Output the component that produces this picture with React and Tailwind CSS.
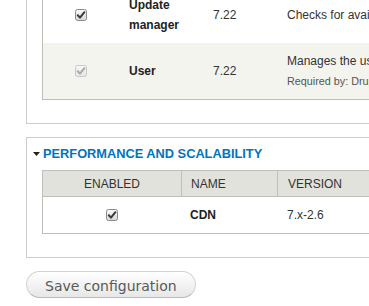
import React from "react";

function Check({ disabled = false, id }) {
  const stroke = disabled ? "#c8c8c8" : "#8a8a8a";
  const mark = disabled ? "#a9a9a9" : "#3a3a3a";
  return (
    <svg width="12" height="12" viewBox="0 0 12 12" className="block">
      <defs>
        <linearGradient id={id} x1="0" y1="0" x2="0" y2="1">
          <stop offset="0" stopColor={disabled ? "#f8f8f8" : "#fbfbfb"} />
          <stop offset="1" stopColor={disabled ? "#e6e6e6" : "#d6d6d6"} />
        </linearGradient>
      </defs>
      <rect x="0.5" y="0.5" width="11" height="11" rx="2" fill={`url(#${id})`} stroke={stroke} />
      <path d="M2.8 6.2 L5 8.6 L9.4 3.2" fill="none" stroke={mark} strokeWidth="2" strokeLinecap="round" strokeLinejoin="round" />
    </svg>
  );
}

export default function App() {
  return (
    <div className="w-[369px] h-[306px] overflow-hidden bg-white font-['Liberation_Sans',Arial,sans-serif] text-[12px] leading-[20px] text-[#333]">
      <div className="w-[700px] pl-[26px] -mt-[13px]">
        {/* fieldset 1 (top cut off) */}
        <div className="border-x border-b border-[#cccccc] pl-[15px] pb-[23px]">
          <div className="border-x border-b border-[#bebfb9]">
            <div className="flex h-[56px] items-center bg-white">
              <div className="w-[76px] shrink-0 flex justify-center">
                <Check id="c1" />
              </div>
              <div className="w-[84px] shrink-0 px-[10px] font-bold text-[#222]">Update manager</div>
              <div className="w-[74px] shrink-0 px-[10px]">7.22</div>
              <div className="flex-1 min-w-0 px-[10px] whitespace-nowrap">
                Checks for available updates, and can securely install or update modules and themes via a web interface.
              </div>
            </div>
            <div className="flex h-[56px] items-center bg-[#f3f4ee]">
              <div className="w-[76px] shrink-0 flex justify-center">
                <Check id="c2" disabled />
              </div>
              <div className="w-[84px] shrink-0 px-[10px] font-bold text-[#222]">User</div>
              <div className="w-[74px] shrink-0 px-[10px]">7.22</div>
              <div className="flex-1 min-w-0 px-[10px] whitespace-nowrap">
                <div>Manages the user registration and login system.</div>
                <div className="text-[10.8px] text-[#555]">Required by: Drupal (Field type(s) in use - see Field list)</div>
              </div>
            </div>
          </div>
        </div>

        {/* fieldset 2 */}
        <div className="mt-[13px] border border-[#cccccc] pb-[23px]">
          <div className="mt-[6px] h-[20px] pl-[6px] flex items-center gap-[3px]">
            <svg width="7" height="4" viewBox="0 0 7 4" className="block">
              <path d="M0 0 H7 L3.5 4 Z" fill="#222" />
            </svg>
            <span className="text-[12.8px] font-bold uppercase text-[#0074bd]">Performance and scalability</span>
          </div>
          <div className="mt-[6px] ml-[15px] border border-[#bebfb9]">
            <div className="flex h-[26px] items-center bg-[#e1e2dc] border-b border-[#bebfb9] uppercase">
              <div className="w-[138px] shrink-0 h-full flex items-center justify-center">Enabled</div>
              <div className="w-[96px] shrink-0 h-full flex items-center border-l border-[#bebfb9] pl-[9px]">Name</div>
              <div className="flex-1 h-full flex items-center border-l border-[#bebfb9] pl-[10px]">Version</div>
            </div>
            <div className="flex h-[36px] items-center bg-white">
              <div className="w-[138px] shrink-0 flex justify-center">
                <Check id="c3" />
              </div>
              <div className="w-[96px] shrink-0 pl-[9px] font-bold text-[#222]">CDN</div>
              <div className="flex-1 pl-[10px]">7.x-2.6</div>
            </div>
          </div>
        </div>

        {/* button */}
        <div className="mt-[13px]">
          <button className="h-[27px] px-[18px] pt-[2px] rounded-full border border-[#d2d2d2] border-b-[#b9b9b9] bg-gradient-to-b from-[#ffffff] to-[#e7e7e7] font-['DejaVu_Sans',Verdana,sans-serif] text-[14px] leading-[16px] text-[#5a5a5a]">
            Save configuration
          </button>
        </div>
      </div>
    </div>
  );
}
